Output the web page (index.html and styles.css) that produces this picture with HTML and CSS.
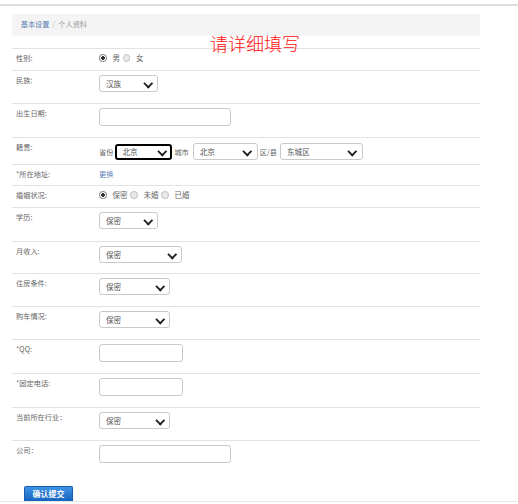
FILE: index.html
```html
<!DOCTYPE html>
<html lang="zh-CN">
<head>
<meta charset="utf-8">
<title>个人资料</title>
<link rel="stylesheet" href="styles.css">
</head>
<body>
<div class="topbar"></div>
<div class="main">
  <div class="crumb"><a class="crumb-link">基本设置</a><span class="sep">/</span><span class="crumb-cur">个人资料</span></div>
  <div class="title">请详细填写</div>
  <div class="form">
    <div class="row h22">
      <div class="label">性别:</div>
      <div class="field">
        <label class="radio"><input type="radio" name="sex" checked><span>男</span></label>
        <label class="radio"><input type="radio" name="sex"><span>女</span></label>
      </div>
    </div>
    <div class="row h33">
      <div class="label">民族:</div>
      <div class="field"><span class="selwrap"><select class="sel w59"><option>汉族</option></select></span></div>
    </div>
    <div class="row h34">
      <div class="label">出生日期:</div>
      <div class="field"><input class="inp w132" type="text"></div>
    </div>
    <div class="row h27">
      <div class="label">籍贯:</div>
      <div class="field region">
        <span class="txt">省份</span>
        <span class="selwrap"><select class="sel focus w57"><option>北京</option></select></span>
        <span class="txt">城市</span>
        <span class="selwrap gap-l"><select class="sel w65"><option>北京</option></select></span>
        <span class="txt">区/县</span>
        <span class="selwrap gap-l1"><select class="sel w83"><option>东城区</option></select></span>
      </div>
    </div>
    <div class="row h21">
      <div class="label">*所在地址:</div>
      <div class="field"><a class="link">更换</a></div>
    </div>
    <div class="row h22">
      <div class="label">婚姻状况:</div>
      <div class="field">
        <label class="radio"><input type="radio" name="mar" checked><span>保密</span></label>
        <label class="radio"><input type="radio" name="mar"><span>未婚</span></label>
        <label class="radio"><input type="radio" name="mar"><span>已婚</span></label>
      </div>
    </div>
    <div class="row h34">
      <div class="label">学历:</div>
      <div class="field"><span class="selwrap"><select class="sel w59"><option>保密</option></select></span></div>
    </div>
    <div class="row h32">
      <div class="label">月收入:</div>
      <div class="field"><span class="selwrap"><select class="sel w83"><option>保密</option></select></span></div>
    </div>
    <div class="row h33">
      <div class="label">住房条件:</div>
      <div class="field"><span class="selwrap"><select class="sel w71"><option>保密</option></select></span></div>
    </div>
    <div class="row h33">
      <div class="label">购车情况:</div>
      <div class="field"><span class="selwrap"><select class="sel w71"><option>保密</option></select></span></div>
    </div>
    <div class="row h34">
      <div class="label">*QQ:</div>
      <div class="field"><input class="inp w84" type="text"></div>
    </div>
    <div class="row h34">
      <div class="label">*固定电话:</div>
      <div class="field"><input class="inp w84" type="text"></div>
    </div>
    <div class="row h33">
      <div class="label">当前所在行业：</div>
      <div class="field"><span class="selwrap"><select class="sel w71"><option>保密</option></select></span></div>
    </div>
    <div class="row h34 last">
      <div class="label">公司：</div>
      <div class="field"><input class="inp w132" type="text"></div>
    </div>
  </div>
  <div class="actions"><button class="btn" type="button">确认提交</button></div>
</div>
<div class="footer"></div>
</body>
</html>
```
FILE: styles.css
```css
html, body {
  margin: 0;
  padding: 0;
  background: #fff;
}
body {
  font-family: "Noto Sans CJK SC", "Noto Sans", sans-serif;
  font-size: 7.2px;
  color: #666;
}
.topbar {
  height: 4px;
  border-bottom: 2px solid #dedede;
}
.main {
  position: relative;
  width: 468px;
  margin-left: 12px;
}
.crumb {
  margin-top: 8px;
  height: 22px;
  box-sizing: border-box;
  padding-left: 8.7px;
  background: #f4f4f4;
  border-radius: 3px;
  line-height: 21px;
  font-size: 7.2px;
}
.crumb-link { color: #5d7fb5; }
.sep { color: #c4c4c4; margin: 0 3px; }
.crumb-cur { color: #9a9a9a; }
.title {
  position: absolute;
  left: 198px;
  top: 20px;
  font-size: 18px;
  line-height: 18px;
  color: #ff1010;
  font-weight: 300;
}
.form {
  margin-top: 12px;
}
.row {
  display: grid;
  grid-template-columns: 87px 1fr;
  border-top: 1px solid #e2e2e2;
  box-sizing: border-box;
  padding-top: 4px;
}
.h21 { height: 21px; }
.h22 { height: 22px; }
.h27 { height: 27px; }
.h32 { height: 32px; }
.h33 { height: 33px; }
.h34 { height: 34px; }
.label {
  padding-left: 4px;
  line-height: 10px;
  color: #676767;
}
.field {
  display: flex;
  align-items: center;
  align-self: start;
  min-height: 10px;
  color: #666;
}
.region {
  gap: 2px;
  padding-top: 1px;
}
.region .gap-l { margin-left: 2px; }
.region .gap-l1 { margin-left: 1px; }
.txt { line-height: 10px; }
.link { color: #5d7fb5; line-height: 10px; }
.radio {
  display: inline-flex;
  align-items: center;
  line-height: 10px;
  font-size: 7.5px;
}
.radio input {
  -webkit-appearance: none;
  appearance: none;
  width: 7.5px;
  height: 7.5px;
  box-sizing: border-box;
  margin: 0 6px 0 0;
  border: 1px solid #bdbdbd;
  border-radius: 50%;
  background: #e9e9e9;
}
.radio input:checked {
  border-color: #777;
  background: radial-gradient(circle, #333 0 1.6px, #fff 2.1px);
}
.radio span { margin-right: 2.5px; }
.selwrap {
  position: relative;
  display: inline-block;
  line-height: 0;
}
.selwrap::after {
  content: "";
  position: absolute;
  right: 7px;
  top: 4.5px;
  width: 4.5px;
  height: 4.5px;
  border-right: 2px solid #222;
  border-bottom: 2px solid #222;
  transform: rotate(45deg);
  pointer-events: none;
}
.sel {
  -webkit-appearance: none;
  appearance: none;
  height: 17px;
  box-sizing: border-box;
  margin: 0;
  padding: 0 0 0 6px;
  border: 1px solid #c9c9c9;
  border-radius: 3px;
  background: #fff;
  font-family: "Noto Sans CJK SC", "Noto Sans", sans-serif;
  font-size: 7.6px;
  color: #555;
  outline: none;
}
.sel.focus {
  border: 2px solid #000;
  padding-left: 5px;
  height: 16px;
}
.w57 { width: 57px; }
.w59 { width: 59px; }
.w65 { width: 65px; }
.w71 { width: 71px; }
.w83 { width: 83px; }
.inp {
  height: 18px;
  box-sizing: border-box;
  margin: 0;
  padding: 0 4px;
  border: 1px solid #c9c9c9;
  border-radius: 3px;
  background: #fff;
}
.w84 { width: 84px; }
.w132 { width: 132px; }
.actions {
  padding-top: 12px;
  padding-left: 12px;
  line-height: 0;
}
.btn {
  width: 49px;
  height: 15px;
  margin: 0;
  padding: 0;
  border: 1px solid #1b5eae;
  border-bottom: none;
  border-radius: 2px 2px 0 0;
  background: linear-gradient(#3e93e6, #1463bf);
  color: #fff;
  font-family: "Noto Sans CJK SC", "Noto Sans", sans-serif;
  font-size: 8px;
  font-weight: bold;
  line-height: 14px;
}
.footer {
  border-top: 1px solid #e6e6e6;
  height: 10px;
}
```
